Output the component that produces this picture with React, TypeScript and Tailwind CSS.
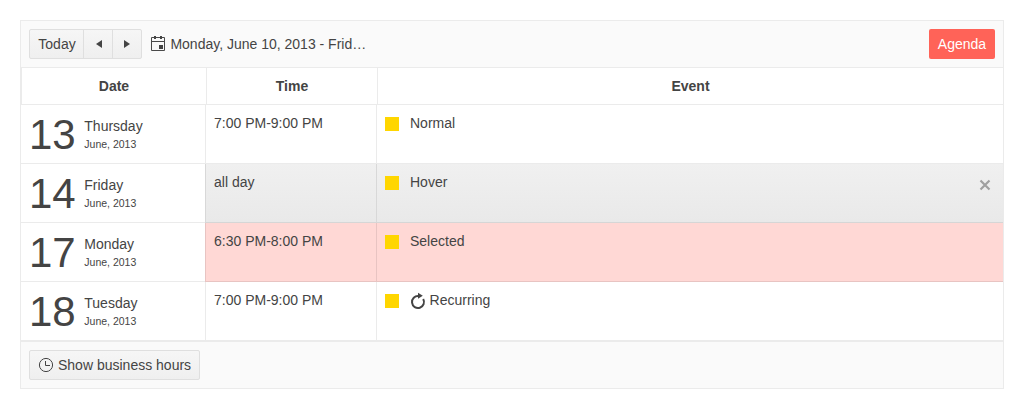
type Row = {
  day: string;
  weekday: string;
  time: string;
  title: string;
  state?: 'hover' | 'selected';
  recurring?: boolean;
};

const rows: Row[] = [
  { day: '13', weekday: 'Thursday', time: '7:00 PM-9:00 PM', title: 'Normal' },
  { day: '14', weekday: 'Friday', time: 'all day', title: 'Hover', state: 'hover' },
  { day: '17', weekday: 'Monday', time: '6:30 PM-8:00 PM', title: 'Selected', state: 'selected' },
  { day: '18', weekday: 'Tuesday', time: '7:00 PM-9:00 PM', title: 'Recurring', recurring: true },
];

const cellStyles = {
  normal: 'border-[#ebebeb]',
  hover: 'border-[#d8d8d8] border-b-[#d6d6d6] bg-linear-to-b from-[#f0f0f0] to-[#e9e9e9]',
  selected: 'border-[#e8c4c2] bg-[#ffd8d5]',
};

const buttonStyle = 'border border-[#dfdfdf] bg-linear-to-b from-[#f6f6f6] to-[#efefef]';

function CalendarIcon() {
  return (
    <svg width="16" height="16" viewBox="0 0 16 16" className="shrink-0">
      <path d="M1.5 1.5h13v13h-13zM1.5 5.5h13" fill="none" stroke="#4a4a4a" />
      <path d="M4 0h2v3H4zM10 0h2v3h-2zM9 9h4v4H9z" fill="#444" />
    </svg>
  );
}

function ClockIcon() {
  return (
    <svg width="16" height="16" viewBox="0 0 16 16" className="shrink-0">
      <circle cx="8" cy="8" r="6.6" fill="none" stroke="#444" strokeWidth="1" />
      <path d="M7.5 4v4.5H12" fill="none" stroke="#444" />
    </svg>
  );
}

function RecurIcon() {
  return (
    <svg width="16" height="18" viewBox="0 0 16 18" className="shrink-0">
      <path d="M8.6 4.03A6 6 0 1 0 13.2 7" fill="none" stroke="#444" strokeWidth="2" />
      <path d="M8 .8l4.8 3L8 6.8z" fill="#444" />
    </svg>
  );
}

function EventRow({ row }: { row: Row }) {
  const look = cellStyles[row.state ?? 'normal'];
  return (
    <div className="flex h-[59px]">
      <div className="flex w-[184px] shrink-0 items-start border-b border-[#ebebeb] pl-2">
        <span className="w-[55.3px] pt-[9px] text-[42px] leading-[42px]">{row.day}</span>
        <div className="pt-[11px]">
          <div className="leading-5">{row.weekday}</div>
          <div className="text-[10.5px] leading-4">June, 2013</div>
        </div>
      </div>
      <div className={`w-[171px] shrink-0 border-b border-l px-2 pt-2 leading-5 ${look}`}>{row.time}</div>
      <div className={`flex min-w-0 flex-1 items-start border-b border-l px-2 pt-2 leading-5 ${look}`}>
        <span className="mt-1 mr-[11px] size-3.5 bg-[#ffd600]" />
        {row.recurring && (
          <span className="mr-[3.6px] mt-0.5">
            <RecurIcon />
          </span>
        )}
        <span>{row.title}</span>
        {row.state === 'hover' && (
          <svg width="16" height="16" viewBox="0 0 16 16" className="mt-[5px] mr-0.5 ml-auto">
            <path d="M3.5 3.5l9 9M12.5 3.5l-9 9" stroke="#a0a0a0" strokeWidth="2.2" />
          </svg>
        )}
      </div>
    </div>
  );
}

export default function App() {
  return (
    <div className="h-[409px] bg-white p-5 font-['Liberation_Sans',Arial,sans-serif] text-sm leading-5 text-[#444]">
      <div className="border border-[#ebebeb]">
        <header className="flex h-[47px] items-center border-b border-[#ebebeb] bg-[#fafafa] px-2">
          <div className="flex h-[30px]">
            <button className={`w-[55px] rounded-l-xs pl-px ${buttonStyle}`}>Today</button>
            <button className={`-ml-px flex w-[30px] items-center justify-center pl-px ${buttonStyle}`}>
              <svg width="6" height="8" viewBox="0 0 6 8">
                <path d="M6 0v8L0 4z" fill="#444" />
              </svg>
            </button>
            <button className={`-ml-px flex w-[30px] items-center justify-center rounded-r-xs ${buttonStyle}`}>
              <svg width="6" height="8" viewBox="0 0 6 8">
                <path d="M0 0v8l6-4z" fill="#444" />
              </svg>
            </button>
          </div>
          <div className="ml-2 flex items-center gap-[4.4px]">
            <CalendarIcon />
            <span>Monday, June 10, 2013 - Frid…</span>
          </div>
          <button className="ml-auto h-[30px] w-[66px] rounded-xs bg-[#ff6358] text-white">Agenda</button>
        </header>
        <div className="flex h-[37px] border-b border-[#ebebeb] text-center font-bold leading-9">
          <div className="w-[185px] border-l border-[#ebebeb]">Date</div>
          <div className="w-[171px] border-l border-[#ebebeb]">Time</div>
          <div className="flex-1 border-l border-[#ebebeb]">Event</div>
        </div>
        {rows.map((row) => (
          <EventRow key={row.day} row={row} />
        ))}
        <footer className="flex h-[47px] items-center border-t border-[#ebebeb] bg-[#fafafa] px-2">
          <button className={`flex h-[30px] w-[171px] items-center gap-1 rounded-xs pl-2 ${buttonStyle}`}>
            <ClockIcon />
            <span className="whitespace-nowrap">Show business hours</span>
          </button>
        </footer>
      </div>
    </div>
  );
}
